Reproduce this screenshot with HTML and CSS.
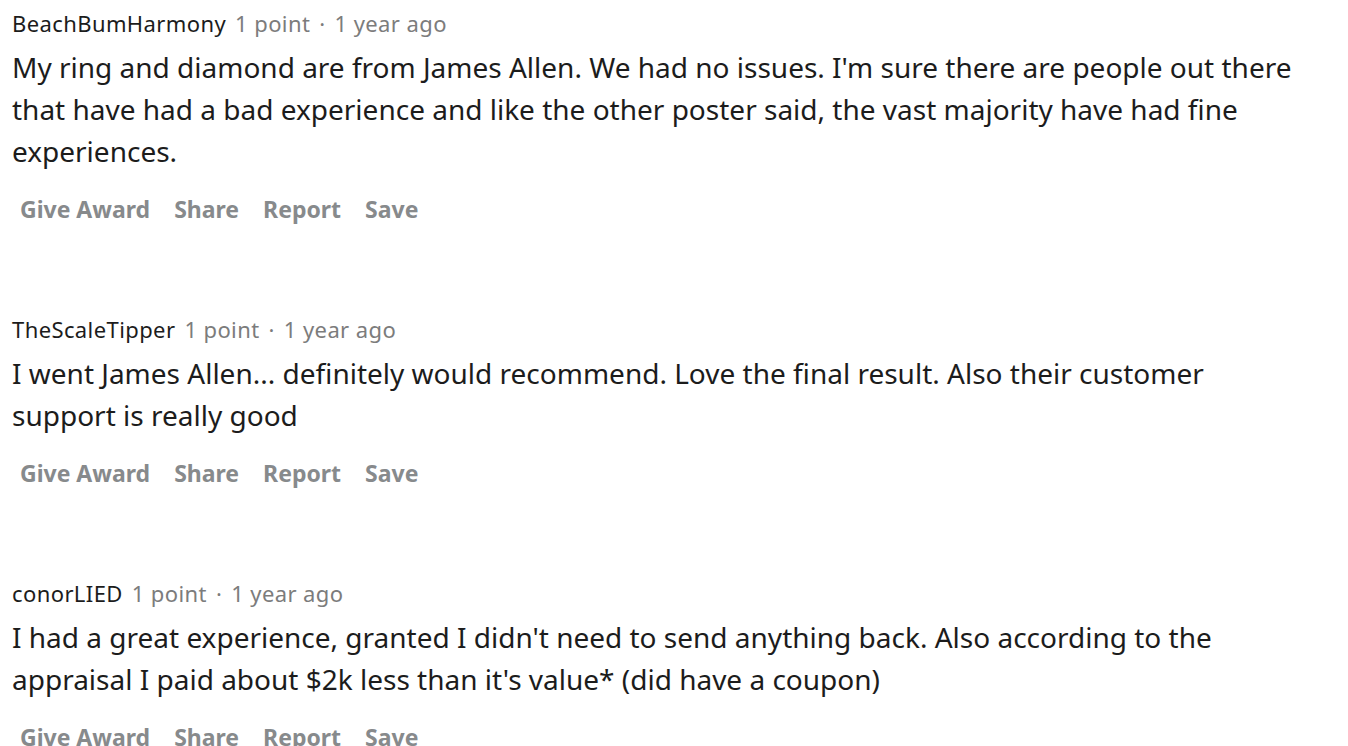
FILE: index.html
```html
<!DOCTYPE html>
<html>
<head>
<meta charset="utf-8">
<link rel="stylesheet" href="styles.css">
</head>
<body>
<div class="thread">
  <div class="comment">
    <div class="meta"><span class="author">BeachBumHarmony</span><span class="info">1 point</span><span class="dot">·</span><span class="info">1 year ago</span></div>
    <div class="body">My ring and diamond are from James Allen. We had no issues. I'm sure there are people out there that have had a bad experience and like the other poster said, the vast majority have had fine experiences.</div>
    <div class="actions"><span class="btn">Give Award</span><span class="btn">Share</span><span class="btn">Report</span><span class="btn">Save</span></div>
  </div>
  <div class="comment">
    <div class="meta"><span class="author">TheScaleTipper</span><span class="info">1 point</span><span class="dot">·</span><span class="info">1 year ago</span></div>
    <div class="body">I went James Allen... definitely would recommend. Love the final result. Also their customer support is really good</div>
    <div class="actions"><span class="btn">Give Award</span><span class="btn">Share</span><span class="btn">Report</span><span class="btn">Save</span></div>
  </div>
  <div class="comment">
    <div class="meta"><span class="author">conorLIED</span><span class="info">1 point</span><span class="dot">·</span><span class="info">1 year ago</span></div>
    <div class="body">I had a great experience, granted I didn't need to send anything back. Also according to the appraisal I paid about $2k less than it's value* (did have a coupon)</div>
    <div class="actions"><span class="btn">Give Award</span><span class="btn">Share</span><span class="btn">Report</span><span class="btn">Save</span></div>
  </div>
</div>
</body>
</html>
```
FILE: styles.css
```css
html, body {
  margin: 0;
  padding: 0;
  background: #ffffff;
}
.thread {
  padding: 7px 0 0 12px;
  width: 1290px;
}
.comment {
  margin-bottom: 84px;
}
.meta {
  display: flex;
  align-items: baseline;
  font-family: "Noto Sans", sans-serif;
  font-size: 22px;
  letter-spacing: 0.4px;
  line-height: 32px;
  height: 32px;
  white-space: nowrap;
}
.author {
  color: #1c1c1c;
  margin-right: 9px;
}
.info {
  color: #7c7c7c;
}
.dot {
  color: #7c7c7c;
  margin: 0 9px;
}
.body {
  margin-top: 7px;
  font-family: "Noto Sans", sans-serif;
  font-size: 28px;
  line-height: 42px;
  color: #1c1c1c;
}
.actions {
  margin-top: 17px;
  height: 40px;
  display: flex;
  align-items: center;
  gap: 24px;
  padding-left: 8px;
}
.btn {
  font-family: "Noto Sans", sans-serif;
  font-weight: 700;
  font-size: 23px;
  color: #878a8c;
  line-height: 40px;
}
```
